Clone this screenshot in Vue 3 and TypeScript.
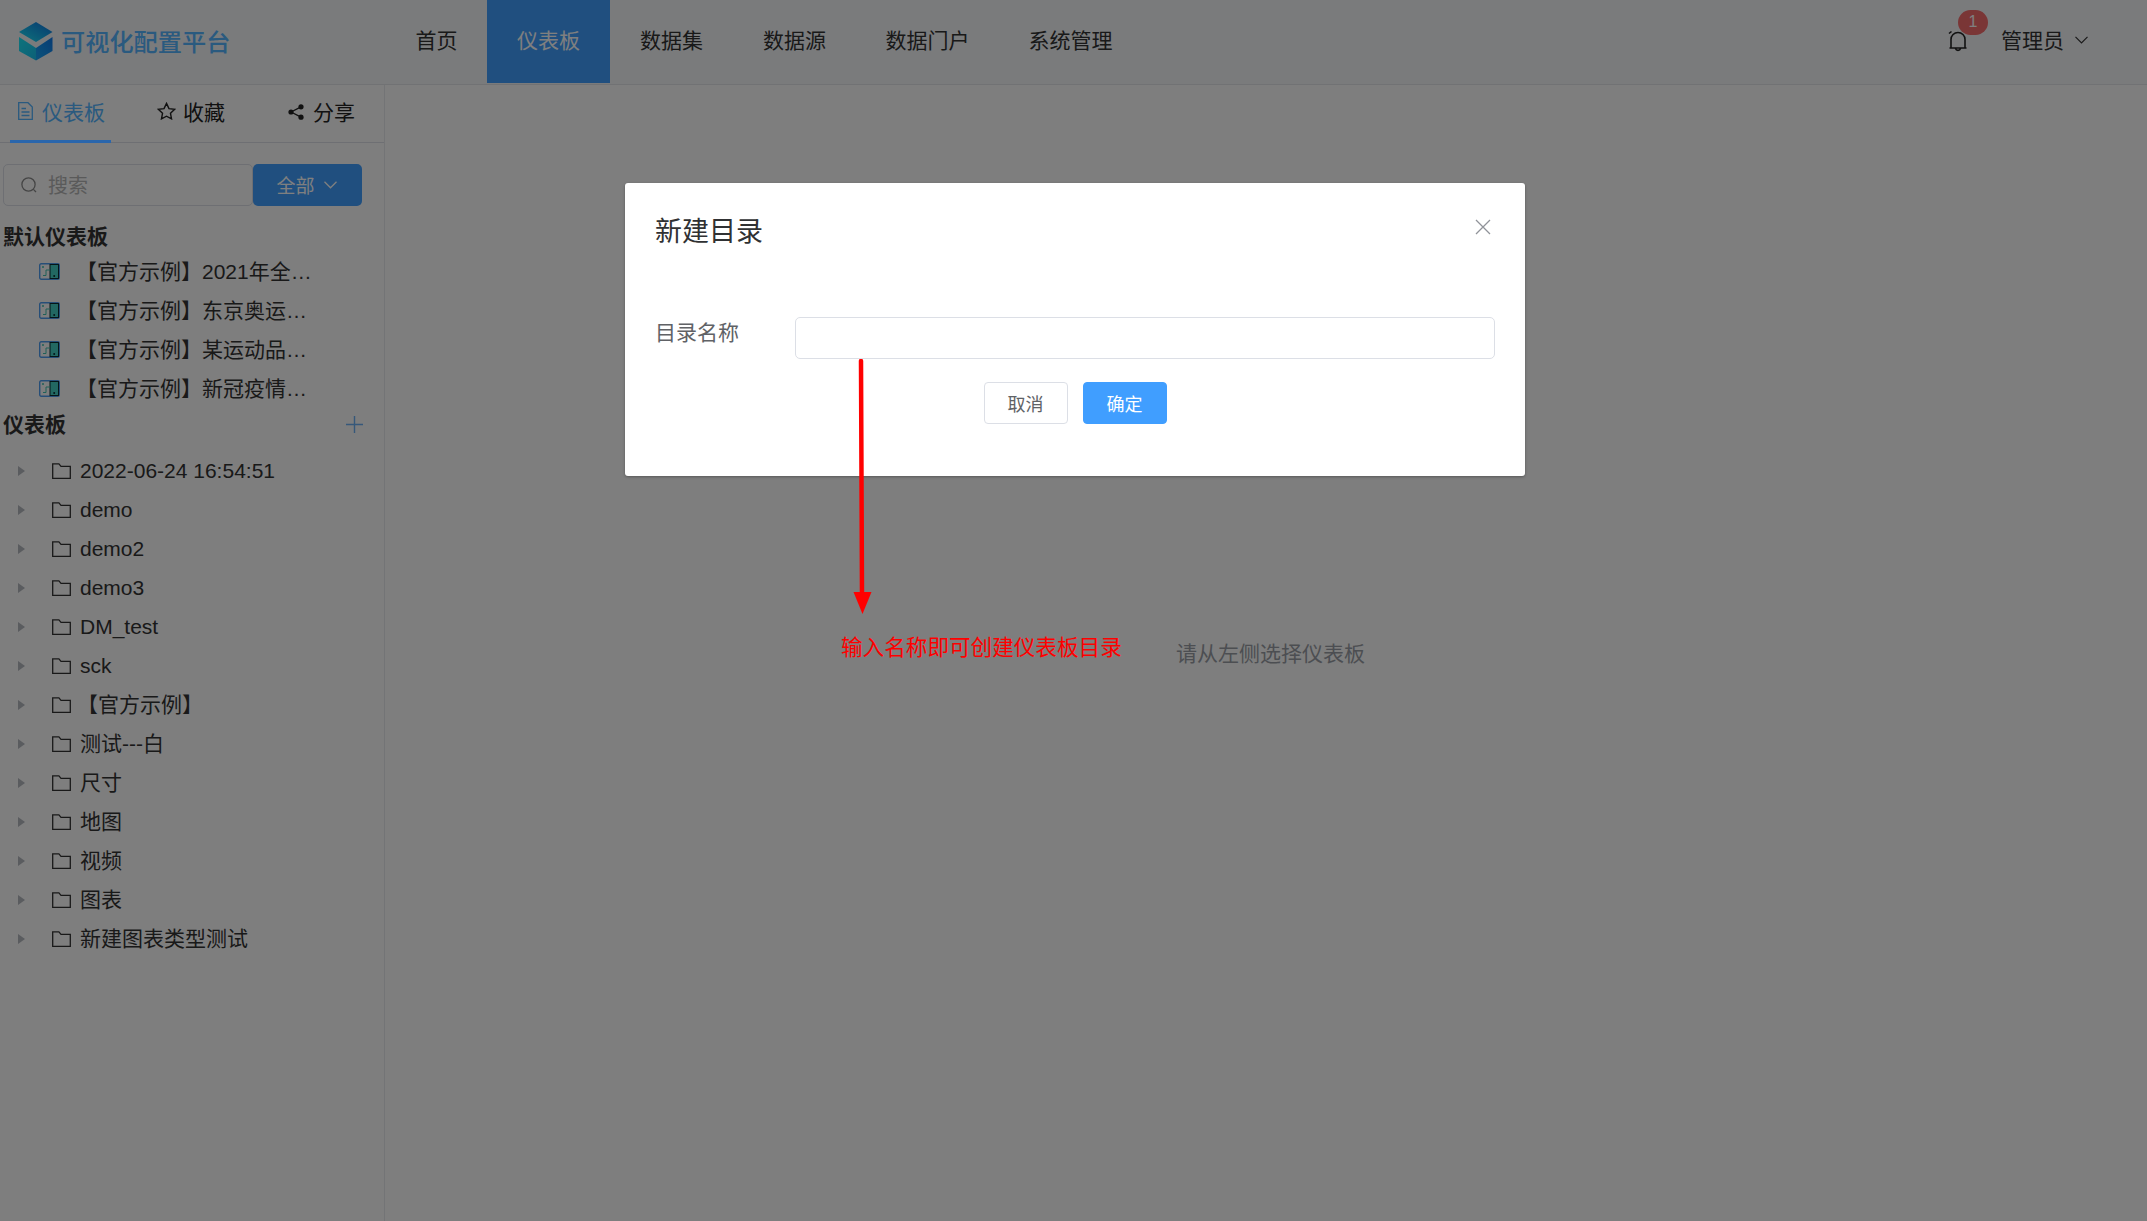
<script setup lang="ts">
const navItems = [
  { label: '首页', width: 92 },
  { label: '仪表板', width: 123, active: true },
  { label: '数据集', width: 123 },
  { label: '数据源', width: 123 },
  { label: '数据门户', width: 143 },
  { label: '系统管理', width: 143 },
]
const defaults = [
  '【官方示例】2021年全国经济数据',
  '【官方示例】东京奥运会奖牌榜',
  '【官方示例】某运动品牌销售',
  '【官方示例】新冠疫情数据分析',
]
const folders = [
  '2022-06-24 16:54:51', 'demo', 'demo2', 'demo3', 'DM_test', 'sck', '【官方示例】',
  '测试---白', '尺寸', '地图', '视频', '图表', '新建图表类型测试',
].map((name) => ({
  name,
  cjk: /[^\x00-\x7f]/.test(name),
  bracket: name.startsWith('【'),
}))
</script>

<template>
  <div class="page">
    <header class="header">
      <div class="brand">
        <svg class="logo" viewBox="0 0 34 39" width="34" height="39">
          <defs>
            <linearGradient id="lg" x1="0" y1="1" x2="1" y2="0">
              <stop offset="0" stop-color="#1ce8f8" />
              <stop offset="1" stop-color="#1070e0" />
            </linearGradient>
            <linearGradient id="lf" x1="0" y1="0" x2="1" y2="1">
              <stop offset="0" stop-color="#1ce8f8" />
              <stop offset="1" stop-color="#18c0f0" />
            </linearGradient>
            <linearGradient id="rf" x1="0" y1="1" x2="1" y2="0">
              <stop offset="0" stop-color="#18a8f8" />
              <stop offset="1" stop-color="#1078e8" />
            </linearGradient>
          </defs>
          <path d="M17 0 33.5 10 17 20 0 10Z" fill="url(#lg)" />
          <path d="M0 15 17 26V38.5L0 29Z" fill="url(#lf)" />
          <path d="M33.5 15 17 26V38.5L33.5 29Z" fill="url(#rf)" />
        </svg>
        <span class="brand-text">可视化配置平台</span>
      </div>
      <nav class="nav">
        <a v-for="n in navItems" :key="n.label" class="nav-item" :class="{ active: n.active }" :style="{ width: n.width + 'px' }">{{ n.label }}</a>
      </nav>
      <div class="user">
        <div class="bell">
          <svg viewBox="0 0 20 23" width="20" height="23" fill="none" stroke="#222" stroke-width="1.6">
            <path d="M3 18V9.5a7 7 0 0 1 14 0V18ZM1.5 18h17M7.5 18.5a2.6 2.6 0 0 0 5 0M1 3.5 3.5 1.5" />
          </svg>
          <span class="badge">1</span>
        </div>
        <span class="user-name">管理员</span>
        <svg class="chev" viewBox="0 0 13 8" width="13" height="8" fill="none" stroke="#333" stroke-width="1.2"><path d="M.5.8 6.5 6.8 12.5.8" /></svg>
      </div>
    </header>
    <div class="body">
      <aside class="side">
        <div class="tabs">
          <div class="tab active tab-a">
            <svg viewBox="0 0 15 18" width="15" height="18" fill="none" stroke="currentColor" stroke-width="1.3"><path d="M.7.7H10L14.3 5V17.3H.7ZM3.5 6.5H8M3.5 10h8M3.5 13.5h8" /></svg>
            <span>仪表板</span>
          </div>
          <div class="tab tab-b">
            <svg viewBox="0 0 20 19" width="19" height="18" fill="none" stroke="#222" stroke-width="1.5"><path d="M10 1.5 12.6 7l6 .8-4.4 4.1 1.1 5.9L10 15l-5.3 2.8 1.1-5.9L1.4 7.8l6-.8Z" /></svg>
            <span>收藏</span>
          </div>
          <div class="tab tab-c">
            <svg class="share" viewBox="0 0 16 16" width="16" height="16" fill="#222"><circle cx="13" cy="2.8" r="2.6" /><circle cx="3" cy="8" r="2.6" /><circle cx="13" cy="13.2" r="2.6" /><path d="M3 8 13 2.8M3 8 13 13.2" stroke="#222" stroke-width="1.4" /></svg>
            <span>分享</span>
          </div>
        </div>
        <div class="search-row">
          <div class="search">
            <svg viewBox="0 0 16 16" width="16" height="16" fill="none" stroke="#8a8a8a" stroke-width="1.3"><circle cx="7.5" cy="7.5" r="6.6" /><path d="M12.4 12.4 15 15" /></svg>
            <span>搜索</span>
          </div>
          <div class="all-btn">
            <span>全部</span>
            <svg viewBox="0 0 13 8" width="13" height="8" fill="none" stroke="#fff" stroke-width="1.3"><path d="M.5.8 6.5 6.8 12.5.8" /></svg>
          </div>
        </div>
        <div class="section-title first">默认仪表板</div>
        <ul class="list">
          <li v-for="d in defaults" :key="d" class="def-item">
            <svg viewBox="0 0 21 17" width="21" height="17">
              <rect x=".7" y=".7" width="19.6" height="15.6" rx="1.5" fill="none" stroke="#4c9cf0" stroke-width="1.4" />
              <rect x="11" y="1.5" width="8.5" height="14" fill="#44d0c4" stroke="#0a2a30" />
              <path d="M4 12.5h3V7h4" fill="none" stroke="#40c0b0" />
              <circle cx="4" cy="4" r="1" fill="#40c0b0" />
              <circle cx="15.2" cy="13" r="1" fill="#0a2a30" />
            </svg>
            <span class="def-text">{{ d }}</span>
          </li>
        </ul>
        <div class="section-title second">
          <span class="second-label">仪表板</span>
          <svg viewBox="0 0 17 17" width="17" height="17" stroke="#6cb0f5" stroke-width="1.4"><path d="M8.5 0v17M0 8.5h17" /></svg>
        </div>
        <ul class="tree">
          <li v-for="f in folders" :key="f.name" class="tree-row">
            <i class="caret"></i>
            <svg viewBox="0 0 19 16" width="19" height="16" fill="none" stroke="#333" stroke-width="1.3"><path d="M.7 15.3V.9h6.2L9 3.4h9.3v11.9Z" /></svg>
            <span class="tree-label" :class="{ cjk: f.cjk, bracket: f.bracket }">{{ f.name }}</span>
          </li>
        </ul>
      </aside>
      <main class="main"><span class="empty">请从左侧选择仪表板</span></main>
    </div>

    <div class="mask"></div>
    <div class="underline"></div>

    <div class="dialog-wrap">
      <section class="dialog">
        <div class="dialog-head">
          <span class="dialog-title">新建目录</span>
          <svg class="close" viewBox="0 0 16 16" width="16" height="16" stroke="#909399" stroke-width="1.3"><path d="M1 1 15 15M15 1 1 15" /></svg>
        </div>
        <div class="form-row">
          <label class="form-label">目录名称</label>
          <div class="input"></div>
        </div>
        <div class="actions">
          <div class="btn">取消</div>
          <div class="btn primary">确定</div>
        </div>
      </section>
    </div>

    <svg class="arrow" viewBox="0 0 24 260" width="24" height="260">
      <path d="M10 2 11 240" stroke="#f00" stroke-width="4.5" stroke-linecap="round" />
      <path d="M2.5 233H20.5L11.5 255Z" fill="#f00" />
    </svg>
    <span class="note">输入名称即可创建仪表板目录</span>
  </div>
</template>

<style>
html, body { margin: 0; padding: 0; }
</style>

<style scoped>
* { box-sizing: border-box; }
ul { list-style: none; margin: 0; padding: 0; }
.page {
  position: relative;
  width: 2147px;
  height: 1221px;
  overflow: hidden;
  background: #fcfcfc;
  font-family: "Liberation Sans", "Noto Sans CJK SC", sans-serif;
  color: #333;
  font-size: 21px;
}
.header {
  height: 85px;
  display: flex;
  align-items: flex-start;
  background: #f4f6f9;
  border-bottom: 1px solid #e2e4e8;
}
.brand { display: flex; align-items: center; gap: 8px; width: 395px; height: 83px; padding: 0 0 0 19px; }
.brand-text { font-size: 24.2px; color: #54b4ff; font-weight: 500; padding-bottom: 3px; }
.nav { display: flex; }
.nav-item { height: 83px; display: flex; align-items: center; justify-content: center; color: #333; padding-bottom: 5px; }
.nav-item:first-child { padding-right: 9px; }
.nav-item.active { background: #409eff; color: #fff; }
.user { margin-left: auto; display: flex; align-items: center; height: 83px; padding-right: 59px; padding-bottom: 5px; }
.bell { position: relative; width: 20px; height: 23px; display: flex; margin-right: 33px; margin-left: 2px; margin-top: 4px; }
.badge {
  position: absolute; left: 10px; top: -20px; width: 30px; height: 25px; border-radius: 13px;
  background: #f56c6c; color: #fff; font-size: 16px; display: flex; align-items: center; justify-content: center;
}
.user-name { margin-right: 11px; }
.chev { margin-top: 2px; }
.body { display: flex; height: 1136px; }
.side { width: 385px; border-right: 1px solid #e6e8ec; padding-right: 0; flex: none; }
.tabs { height: 58px; display: flex; border-bottom: 1px solid #dcdfe6; position: relative; }
.tab { display: flex; align-items: center; gap: 9px; height: 56px; color: #222; padding-bottom: 4px; }
.tab.active { color: #54b4ff; }
.tab-a { margin-left: 18px; width: 139px; }
.tab-b { width: 131px; gap: 7px; }
.tab-c { gap: 9px; margin-left: 0; }
.share { margin-top: 1px; }
.underline { position: absolute; left: 10px; top: 140px; width: 101px; height: 3px; background: #2a66ac; }
.search-row { display: flex; margin: 21px 0 0 3px; height: 43px; }
.search {
  width: 250px; height: 42px; border: 1px solid #dcdfe6;
  display: flex; align-items: center; gap: 12px; padding-left: 17px; color: #b5b5b5; font-size: 20px; border-radius: 5px;
}
.search span { padding-bottom: 1px; margin-left: -1px; }
.all-btn {
  width: 109px; height: 42px; background: #409eff; color: #fff; border-radius: 5px; font-size: 19px;
  display: flex; align-items: center; justify-content: center; gap: 9px; padding-right: 2px;
}
.all-btn span { padding-bottom: 2px; }
.section-title { font-weight: 700; color: #333; font-size: 21px; padding-left: 3px; }
.section-title.first { margin-top: 15px; height: 28px; line-height: 29px; }
.section-title.second { display: flex; justify-content: space-between; align-items: center; padding-right: 21px; height: 37px; }
.second-label { padding-bottom: 3px; }
.def-item { height: 39px; display: flex; align-items: center; padding-left: 39px; }
.def-item svg { margin-top: 3px; flex: none; }
.def-text { margin-left: 16px; max-width: 245px; white-space: nowrap; overflow: hidden; text-overflow: ellipsis; }
.tree { margin-top: 8px; }
.tree-row { height: 39px; display: flex; align-items: center; padding-left: 18px; }
.caret { width: 0; height: 0; border-left: 7px solid #b4b8bf; border-top: 5.5px solid transparent; border-bottom: 5.5px solid transparent; margin-right: 27px; }
.tree-row svg { margin-right: 9px; }
.tree-label.cjk { padding-bottom: 4px; }
.tree-label.bracket { margin-left: -3px; }
.main { flex: 1; display: flex; justify-content: center; align-items: center; padding-left: 9px; padding-bottom: 2px; }
.empty { color: #999ca4; }
.mask { position: absolute; inset: 0; background: rgba(0, 0, 0, .5); }
.dialog-wrap { position: absolute; inset: 0; display: flex; justify-content: center; padding: 183px 0 0 3px; pointer-events: none; }
.dialog {
  width: 900px; height: 293px; background: #fff; border-radius: 3px;
  box-shadow: 0 1px 3px rgba(0, 0, 0, .3); padding: 0 30px;
}
.dialog-head { height: 134px; display: flex; justify-content: space-between; padding-top: 30px; position: relative; }
.dialog-title { font-size: 27px; line-height: 38px; color: #303133; }
.close { position: absolute; right: 4px; top: 36px; }
.form-row { display: flex; align-items: flex-start; }
.form-label { width: 140px; padding-top: 1px; line-height: 30px; color: #606266; }
.input { width: 700px; height: 42px; border: 1px solid #dcdfe6; border-radius: 5px; margin-right: -30px; flex: none; }
.actions { display: flex; justify-content: center; gap: 15px; margin-top: 23px; }
.btn {
  width: 84px; height: 42px; border: 1px solid #dcdfe6; border-radius: 4px; font-size: 18px; color: #606266; padding-bottom: 1px;
  display: flex; align-items: center; justify-content: center; background: #fff;
}
.btn.primary { background: #409eff; border-color: #409eff; color: #fff; }
.arrow { position: absolute; left: 851px; top: 359px; }
.note { position: absolute; left: 841px; top: 633px; font-size: 21.6px; line-height: 30px; color: #f00; white-space: nowrap; }
</style>
